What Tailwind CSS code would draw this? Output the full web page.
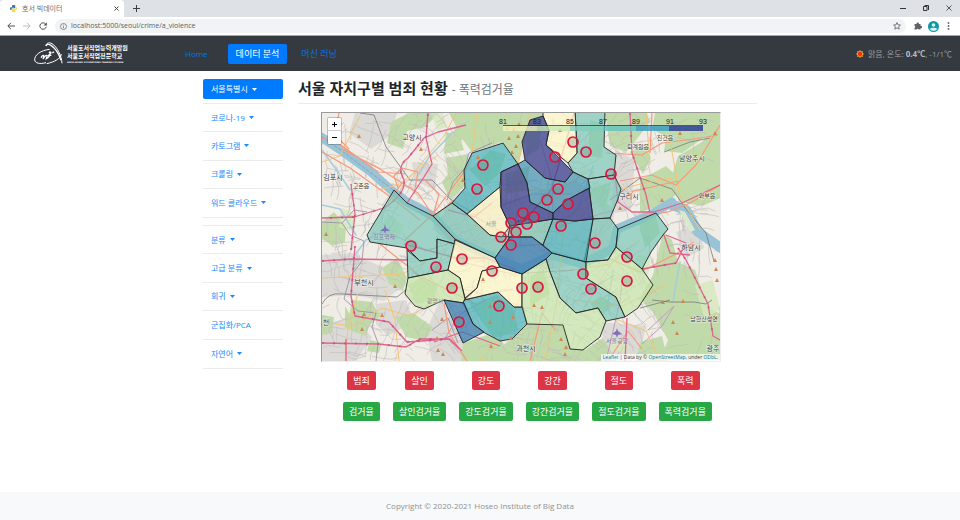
<!DOCTYPE html>
<html lang="ko">
<head>
<meta charset="utf-8">
<meta name="viewport" content="width=device-width, initial-scale=1">
<title>호서 빅데이터</title>
<script src="https://cdn.jsdelivr.net/npm/@tailwindcss/browser@4"></script>
</head>
<body class="flex min-h-screen flex-col bg-white font-['Open_Sans','Noto_Sans_CJK_KR',sans-serif] text-[8px] leading-3 text-[#212529]">

<!-- browser window -->
<div class="flex h-[17px] items-end justify-between bg-[#dee1e6]">
  <div class="flex items-center gap-3">
    <div class="flex h-[17px] w-[124px] items-center rounded-t bg-white pr-1 pl-[10px]">
      <svg class="size-[7px]" viewBox="0 0 14 14" aria-hidden="true"><path fill="#3776ab" d="M7 0C4 0 4 1.400 4 2v2h3.500v.7H2.300C.8 4.700 0 5.800 0 7.300S1 10 2 10h1V8.500C3 7 4 6.500 5 6.500h4c1 0 1.600-.7 1.600-1.600V2C10.600.7 9.500 0 7 0z"/><path fill="#ffd43b" d="M7 14c3 0 3.300-1.300 3.300-2v-2H7v-.7h5C13.400 9.300 14 8.200 14 7s-.8-3-2-3h-1v1.800C11 7 10 7.700 9 7.700H5.300c-1 0-1.600.7-1.600 1.600V12c0 1.300 1 2 3.300 2z"/></svg>
      <span class="ml-[5px] flex-1 text-[7px] text-[#6a6d71]">호서 빅데이터</span>
      <button type="button" aria-label="탭 닫기" class="grid size-2 place-items-center"><svg class="size-[5px]" viewBox="0 0 5 5" stroke="#45494d"><path d="M.5.5l4 4M4.500.5l-4 4"/></svg></button>
    </div>
    <button type="button" aria-label="새 탭" class="-ml-1 grid size-2 place-items-center"><svg class="size-[7px]" viewBox="0 0 7 7" stroke="#3c4043"><path d="M3.500 0v7M0 3.500h7"/></svg></button>
  </div>
  <div class="flex h-[15px] items-center gap-[17px] self-start pr-2">
    <button type="button" aria-label="최소화" class="flex"><svg class="size-[6px]" viewBox="0 0 6 6" stroke="#333"><path d="M0 3.500h6"/></svg></button>
    <button type="button" aria-label="창 크기" class="flex"><svg class="size-[6px]" viewBox="0 0 6 6" fill="none" stroke="#333"><path d="M.5 1.500h3.500v4H.5zM1.700.5h3.800V5"/></svg></button>
    <button type="button" aria-label="닫기" class="flex"><svg class="size-[6px]" viewBox="0 0 6 6" stroke="#333" stroke-width=".8"><path d="M.5.5l5 5M5.500.5l-5 5"/></svg></button>
  </div>
</div>
<div class="flex h-[19px] items-center gap-2 border-b border-[#a5a7aa] bg-white pr-2 pl-[7px]">
  <button type="button" aria-label="뒤로"><svg class="size-2" viewBox="0 0 8 8" fill="none" stroke="#4b4f54"><path d="M8 4H1M4 .8L.8 4 4 7.200"/></svg></button>
  <button type="button" aria-label="앞으로"><svg class="size-2" viewBox="0 0 8 8" fill="none" stroke="#babcbe"><path d="M0 4h7M4 .8L7.200 4 4 7.200"/></svg></button>
  <button type="button" aria-label="새로고침"><svg class="size-2" viewBox="0 0 8 8" fill="none" stroke="#4b4f54"><path d="M6.700 2.200A3.200 3.200 0 1 0 7.200 4.800"/><path fill="#4b4f54" stroke="none" d="M7.800.3v3.200H4.600z"/></svg></button>
  <div class="flex h-[14px] flex-1 items-center gap-1 rounded-full bg-[#f1f3f4] px-[5px]">
    <svg class="size-[7px]" viewBox="0 0 7 7" fill="none" stroke="#5f6368" stroke-width=".7"><circle cx="3.500" cy="3.500" r="3"/><path d="M3.500 3v2.200M3.500 1.600v.8"/></svg>
    <input type="text" aria-label="주소" value="localhost:5000/seoul/crime/a_violence" class="min-w-0 flex-1 bg-transparent text-[7px] text-[#5c5f63] outline-none">
    <button type="button" aria-label="북마크"><svg class="size-2" viewBox="0 0 14 14" fill="none" stroke="#5f6368" stroke-width="1.500"><path d="M7 1l1.800 4 4.200.4-3.200 2.800 1 4.300L7 10.200l-3.800 2.300 1-4.300L1 5.400 5.200 5z"/></svg></button>
  </div>
  <div class="flex items-center gap-[6px]">
    <button type="button" aria-label="확장 프로그램"><svg class="size-2" viewBox="0 0 16 16" fill="#5f6368"><path d="M1 4h4.200a2.300 2.300 0 1 1 4.400 0H13v4a2.300 2.300 0 1 1 0 4.300V15H9.500a2.200 2.200 0 0 0-4.300 0H1v-3.700a2.100 2.100 0 0 0 0-4z"/></svg></button>
    <button type="button" aria-label="프로필"><svg class="size-[11px]" viewBox="0 0 22 22"><circle cx="11" cy="11" r="11" fill="#0e98a6"/><circle cx="11" cy="8" r="3.600" fill="#d5f1f3"/><path fill="#d5f1f3" d="M3.500 16c2-3.200 13-3.200 15 0-3.500 5-11.500 5-15 0z"/></svg></button>
    <button type="button" aria-label="메뉴" class="px-[2px]"><svg class="h-2 w-[3px]" viewBox="0 0 3 8" fill="#5f6368"><circle cx="1.500" cy="1" r=".9"/><circle cx="1.500" cy="4" r=".9"/><circle cx="1.500" cy="7" r=".9"/></svg></button>
  </div>
</div>

<!-- site navigation -->
<nav class="flex h-[35px] items-center bg-[#343a40] pr-2 pl-[33px]">
  <a href="#" class="flex w-[144px] items-center gap-1 text-white">
    <svg class="h-6 w-[30px]" viewBox="0 0 90 72" fill="none" stroke="#fff" aria-hidden="true">
      <path stroke-width="3" d="M50 22C23 25 4 39 5 54c1 10 16 13 34 8M41 65C65 60 84 49 85 36"/>
      <path stroke-width="3" d="M39 12c0-9 9-12 18-7 15 9 29 36 30 59"/>
      <path stroke-width="4" d="M39 12c2-6 9-6 15-2 12 8 24 26 30 45"/>
      <path stroke-width="4" d="M24 47c5-8 9-9 8-2l-2 6c5-9 11-14 12-8l-2 7c6-3 9-7 12-12M48 33c3-5 7-3 5 1l-6 6h8M58 33l5-4"/>
    </svg>
    <span class="flex flex-col font-bold whitespace-nowrap">
      <span class="text-[6px] leading-2">서울호서직업능력개발원</span>
      <span class="text-[6px] leading-2">서울호서직업전문학교</span>
      <span class="font-['DejaVu_Sans',sans-serif] text-[2px] leading-1">SEOUL HOSEO OCCUPATIONAL TRAINING COLLEGE</span>
    </span>
  </a>
  <ul class="flex items-center gap-2 text-[#0874e6]">
    <li><a href="#" class="block px-2 py-1">Home</a></li>
    <li class="ml-1"><a href="#" class="block rounded-[2px] bg-[#007bff] px-2 py-1 text-[9px] text-white">데이터 분석</a></li>
    <li><a href="#" class="block px-[6px] py-1 text-[9px]">머신 러닝</a></li>
  </ul>
  <div class="ml-auto flex items-center gap-1 text-[#9a9da0]">
    <svg class="size-2" viewBox="0 0 16 16" aria-label="맑음"><path fill="#f5a52a" d="M8 0l2 3 3.700-1-.6 3.700L16 8l-2.900 2 .6 3.900-3.700-.8L8 16l-2-2.900-3.700.8.6-3.900L0 8l2.900-2.300L2.300 2 6 3z"/><circle cx="8" cy="8" r="4.300" fill="#f32d13"/></svg>
    <span>맑음, 온도: <b class="text-[#b8babc]">0.4℃</b>, -1/1℃</span>
  </div>
</nav>

<main class="mx-auto grid w-full max-w-[570px] flex-1 grid-cols-[80px_1fr] items-start gap-[15px] px-2 pt-2">
  <nav aria-label="메뉴" class="text-[#1a88ff]">
    <a href="#" class="flex h-5 items-center gap-1 rounded-[2px] bg-[#007bff] px-2 text-white">서울특별시<svg class="h-[3px] w-[5px]" viewBox="0 0 5 3" fill="currentColor"><path d="M0 0h5L2.500 3z"/></svg></a>
    <ul class="mt-1 grid min-h-[115px] auto-rows-fr divide-y divide-[#ebebeb] border-y border-[#ebebeb]">
      <li class="flex items-center px-2"><a href="#" class="flex items-center gap-1">코로나-19<svg class="h-[3px] w-[5px]" viewBox="0 0 5 3" fill="currentColor"><path d="M0 0h5L2.500 3z"/></svg></a></li>
      <li class="flex items-center px-2"><a href="#" class="flex items-center gap-1">카토그램<svg class="h-[3px] w-[5px]" viewBox="0 0 5 3" fill="currentColor"><path d="M0 0h5L2.500 3z"/></svg></a></li>
      <li class="flex items-center px-2"><a href="#" class="flex items-center gap-1">크롤링<svg class="h-[3px] w-[5px]" viewBox="0 0 5 3" fill="currentColor"><path d="M0 0h5L2.500 3z"/></svg></a></li>
      <li class="flex items-center px-2"><a href="#" class="flex items-center gap-1">워드 클라우드<svg class="h-[3px] w-[5px]" viewBox="0 0 5 3" fill="currentColor"><path d="M0 0h5L2.500 3z"/></svg></a></li>
    </ul>
    <ul class="mt-[7px] grid min-h-36 auto-rows-fr divide-y divide-[#ebebeb] border-y border-[#ebebeb]">
      <li class="flex items-center px-2"><a href="#" class="flex items-center gap-1">분류<svg class="h-[3px] w-[5px]" viewBox="0 0 5 3" fill="currentColor"><path d="M0 0h5L2.500 3z"/></svg></a></li>
      <li class="flex items-center px-2"><a href="#" class="flex items-center gap-1">고급 분류<svg class="h-[3px] w-[5px]" viewBox="0 0 5 3" fill="currentColor"><path d="M0 0h5L2.500 3z"/></svg></a></li>
      <li class="flex items-center px-2"><a href="#" class="flex items-center gap-1">회귀<svg class="h-[3px] w-[5px]" viewBox="0 0 5 3" fill="currentColor"><path d="M0 0h5L2.500 3z"/></svg></a></li>
      <li class="flex items-center px-2"><a href="#">군집화/PCA</a></li>
      <li class="flex items-center px-2"><a href="#" class="flex items-center gap-1">자연어<svg class="h-[3px] w-[5px]" viewBox="0 0 5 3" fill="currentColor"><path d="M0 0h5L2.500 3z"/></svg></a></li>
    </ul>
  </nav>

  <section>
    <h1 class="flex items-baseline gap-1 border-b border-[#ebebeb] pb-[6px] text-[15px] leading-[18px] font-bold">서울 자치구별 범죄 현황 <small class="text-[12px] leading-3 font-normal text-[#6c757d]">- 폭력검거율</small></h1>

    <div class="relative mt-2 mr-9 ml-[23px] border border-t-[#9a9a9a] border-r-[#eee] border-b-[#eee] border-l-[#9a9a9a]">
      <svg id="map" class="block w-full" viewBox="322 113 398 248" role="img" aria-label="서울 자치구별 폭력검거율 지도">
        <rect x="322" y="113" width="398" height="248" fill="#f0ede6"/>
        <!-- built-up areas -->
        <g fill="#dcdad7">
          <path d="M355 113h42l-6 22-20 14-22-16zM322 255l30-2 30 14 20 20-18 14-30-6-32 2zM376 304l30-4 8 22-26 14-12-12zM412 162l26 2-4 26-20-10zM440 300l24 40 4 21h-36l-6-30zM455 190l60 10 60-20 40 30-10 50-60 10-80-10-30-30zM602 322l44 4-6 28-36 6zM615 150l20 10-4 50-20 4zM676 232l22-8 6 24-18 10zM322 325l30-8 20 20-16 24h-34z"/>
        </g>
        <!-- forest and parks -->
        <g fill="#c0dba9">
          <path d="M449 113h96l-8 16-14 17-5 20-16-24-30 10-9-12-12-2 5-12zM446 158l22-4-3 32-15 14-8-18 6-8zM322 222l12-10 12 14-1 16-13 4-10-8zM391 122l18-9h30l-14 14-18 4-4 18-16-6zM446 132l14 6 4 12-20 4z"/>
          <path d="M605 113h42l3 9-14 18-10 12-16-6zM655 113h65v12l-18 14-20 14-18-2 2-14-14-8zM720 116v82l-18 8-22-4-10-20 8-26 24-14zM630 152l14-8 7 14-8 16zM640 180l26-14 19 18-18 20-27 8z"/>
          <path d="M663 232l9 8 6 22 17 8 12 36 13 8v46h-60l8-20-14-26-14-16 13-23zM527 324l36 2 8 22 14 2 18-12 14 23H480l26-18zM463 343l24-8 16 7-6 19h-36zM640 342l22-6 6 25h-32z"/>
          <path d="M382 268l15-10 10 20-4 12-14-6zM352 300l20 2 8 14-14 12-18-6zM345 306l8 14 16 6-4 10-20-8zM395 317l18-4 20 14-8 14-19-4zM322 315l12 2-2 16-10 2zM370 340l12 3-3 10-12-2zM408 285l14-8 16 9-4 14-18 4zM470 170l20-20 16 4-7 20-14 12zM505 174l24-8-2 24-20 4zM528 125l14-6-3 30-14 8zM590 120l14 4-2 34-14-2zM586 190l25-8-6 30zM470 305l26-10 18 14 4 22-24 7zM530 276l14-6 6 24-20 12zM590 304l10-8 14 8-12 12zM638 220l18-3 4 16-15 15z"/>
        </g>
        <g fill="#d6e8bd" opacity=".8"><path d="M388 214l16 12-9 16-18-8zM341 208l16 6-4 17-14-4zM431 113h12l4 14-10 3zM695 285l18-5 7 30-16 8zM637 255l14 2-3 19-16-5zM610 336l18 6-2 12-16-4z"/></g>
        <g id="streets" fill="none" stroke="#bfbcba" stroke-width=".6"></g>
        <!-- rivers -->
        <g fill="none" stroke-linejoin="round" stroke-linecap="round">
          <path stroke="#99c4d6" stroke-width="9" d="M318 135l24 16 28 20 20 18 17 13 26 14 22 24 40 18 27 11 30-14 30 9 30-15 5-20 33-14 22-13"/>
          <path stroke="#99c4d6" stroke-width="10" d="M672 205l14 5 12 22 26 18"/>
          <path stroke="#a7cddd" stroke-width="1.500" d="M322 150l16 22 12 18M350 262l16-22 24-12M419 174l10-17 24-25M561 228l18-22 14-40M474 280l-4 20 12 20M607 310l6-40M680 262l-4 22-3 18M322 205l18 4 16 26"/>
          <path stroke="#8193b8" stroke-width=".7" stroke-dasharray="3 2" d="M322 137l20 14 50 38 15 14"/>
        </g>
        <path fill="#dce8cb" d="M679 210l6 2 10 18-5 2z"/>
        <!-- administrative borders and railways -->
        <g fill="none" stroke-width="1">
          <path stroke="#9688ab" opacity=".8" d="M322 222l20 1 8 12 14 6-2 20-12 16-6 22 14 12 18 2-4 14 6 16-2 18M342 223l12-13 13 2M447 200l6-18 12-14 4-15 23-10M432 330l16-12 10 25"/>
          <path stroke="#77797d" stroke-width=".8" d="M360 113l14 2 12 32 24 33 22 0 18 19 20 12M322 304q6-12 20-10l55 3 10-8M610 200l30-22 32 11 14 20 20 24 8 28M664 152l26-10 20-4M652 300l18 2 24 0 12 2 6-4M640 308l30-8"/>
          <path stroke="#c09bbf" d="M606 361l14-60 2-20M444 340l16-26 26-14M648 330l26-24-12 20-20 18"/>
        </g>
        <!-- roads -->
        <g fill="none" stroke-linejoin="round">
          <g stroke="#f5c375" stroke-width="1"><path d="M400 190l24-30 20-24 12-23M322 322l30 4 30-18 28 8 24-14M385 290l10 30 4 41M322 278l80-4 24-12M345 361l3-32 10-36M455 190l16-30 6-47M480 361l30-34 16-50M530 113l-12 50-3 44M545 361l12-60 6-70M573 300l50 6 40-20M640 240l-30 24-50 8M620 190l20-6 32-6M650 165l-4-52M700 230l-20-34-9-50M470 225l60 10 60-30M500 190l60 0 30-20M378 190l20-5 40-30M360 116l-20 40-18 6M660 361l-14-30-30-12"/></g>
          <g stroke="#f7997c" stroke-width="1.200"><path d="M322 152l28 16 42 30 28 22M342 149l38 20 38 24 16 24M322 138l16 5 40 29 28 2M388 203l14-20M398 188l-4-12 8-8 16 4-4 22M433 216l6-22-14-14M339 113l-4 22 14 14M620 181l32-6 24 10 20-20 18-30 6-10M606 153l36 2 20-12 32-4 24-4M652 113l-2 40M530 361l12-48 14 18M608 361l20-30 14 18M624 198l10-7 44-10M454 200l-20 17 32 37M720 185l-30 18-22 9-26 4M608 258l32 14 36-18 18-12M405 240l28-26 34-46M467 361l-18-28-5-30M380 244l40 32 56 28"/></g>
          <g stroke="#e0648f" stroke-width="1.300"><path d="M351 250l4-36-4-30M322 218l32-1 30-9q22-14 20-28q-8-14 4-22l16-20 14-6 28-7M355 246l-4 50 4 20 34 6 18 20 42-3 10 10M322 261l30-2 56 1M322 343l56 1 28 3 14-8 30 0 12 12M346 361l0-22M407 203l17-26 8-13-6-26 2-25M448 210l26 7 18-14M404 244l52 14 30 0 30 12M525 220l26-30 16-52 7-25M630 113l2 40 14 42 4 18M615 174l3 28 14 10 22 0 28-9 38-18M642 269l34-6 10-20-20-8M678 248l8 12 22 44 5 32 9 5M627 318l-2 43M664 235l6 18 20 2M434 342l28-10 38 14"/></g>
          <g stroke="#b84a7c" stroke-width="2" stroke-dasharray="2 9" opacity=".6"><path d="M351 250l4-36-4-30M330 218l24-1 30-9q22-14 20-28q-8-14 4-22l16-20M355 246l-4 50 4 20 34 6 18 20 42-3M322 261l30-2M322 343l56 1 28 3 14-8 30 0M426 138l2-25M630 113l2 40 14 42M642 269l34-6M678 248l8 12 22 44 5 32"/></g>
          <g stroke="#b7558b" stroke-width="1"><path opacity=".5" d="M372 233l26 4 28 14 24-8M457 208l36 18 22 20 34-2M540 140l12 40 1 40M500 206l32-12 40 0M560 226l54-16M462 262l50 12 62-4M580 295l35-20M450 285l35 10 28-6"/></g>
        </g>
        <!-- districts -->
        <g stroke="#242424" stroke-width=".9" stroke-linejoin="round">
          <g fill="#76c6b6" fill-opacity=".66">
            <path d="M394 190l13 13 26 13 22 23v5l-18-5v19l-17 3-13-13-37-6-3-7z"/>
            <path d="M407 250l13 11 17-3v-19l18 5-7 26-40 8z"/>
            <path d="M433 216l19-13 15 11 23 21 20 2-15 21-40-19z"/>
            <path d="M575 110h30l-1 37 12 8-2 20-26 4-15-7-5-9 9-10-1-23z"/>
            <path d="M588 179l26-4 7 14-3 10-8 19-17 1z"/>
            <path d="M593 219l17-1 8 11-2 18-8 13-24 2z"/>
            <path d="M618 229l38-16 12 16-5 6-12 17-9 17-26-22z"/>
            <path d="M546 259l6-6 34 9v16l30 19 9 20-19 4-8-13-22 5-16-15-10-26z"/>
            <path d="M510 226l43-7-10 26-11-8h-24z"/>
          </g>
          <g fill="#42afba" fill-opacity=".68">
            <path d="M472 153l31-10 15 21-17 8-1 15-33 27-15-11 13-15-1-18z"/>
            <path d="M464 300l34-8 16 15h9l4 17-15 15-12 2-17-9-10-8-10-21z"/>
            <path d="M553 219l22 2 18-2-7 43-34-9-9-8z"/>
          </g>
          <g fill="#fff7c8" fill-opacity=".74">
            <path d="M543 110h32l1 20 1 23-9 10-22-18 3-15-6-14z"/>
            <path d="M467 214l33-27 1 20 9 19-8 11-12-2z"/>
            <path d="M455 240l40 18 5 9-18 4-5 17-12 10-5-20-12-8z"/>
            <path d="M482 271l18-4 22 7v33h-8l-16-15-34 8 13-12z"/>
          </g>
          <g fill="#c6e5a9" fill-opacity=".7">
            <path d="M408 278l40-8 12 8 5 21-2 4-19-3-20 9-9-3-10-12z"/>
            <path d="M546 259l4 13 10 26 16 15 22-5 8 13-6 16-17 13-13-1-7-24-36-1-5-17v-33z"/>
            <path d="M586 262l22-2 8-13 26 22 11 16-15 23-13 9-9-20-30-19z"/>
          </g>
          <g fill="#3478ae" fill-opacity=".74">
            <path d="M510 237h22l20 16-6 6-24 15-22-7-5-9z"/>
            <path d="M444 300l20 3 9 21 11 8-21 11z"/>
          </g>
          <path fill="#3f91b1" fill-opacity=".7" d="M518 164l7-4 20 18 20 4 8-10 15 7 2 9-23 12-14 13-23-11-3-19z"/>
          <g fill="#3e4290" fill-opacity=".78">
            <path d="M530 120l13-4 6 14-3 15 27 27-8 10-20-4-20-18-3-18z"/>
            <path d="M501 172l17-8 9 19 3 19 23 11v6l-43 7-9-19z"/>
            <path d="M589 188l-22 12-14 13v6l22 2 18-2z"/>
          </g>
        </g>
        <!-- peaks -->
        <g id="peaks" fill="#cf8650"></g>
        <path fill="#8171bd" d="M617 328l1 3 4 3-4 1-1 3-1-3-4-1 4-3zM385 224l1 4 4 3-4 0-1 3-1-3-4 0 4-3z"/>
        <!-- place names -->
        <g fill="#3a3a3a" stroke="#fff" stroke-opacity=".65" stroke-width="1.200" paint-order="stroke" text-anchor="middle" font-family="'Noto Sans CJK KR', sans-serif" font-size="7">
          <text x="412" y="140">고양시</text><text x="333" y="180">김포시</text><text x="364" y="285">부천시</text><text x="692" y="161">남양주시</text><text x="629" y="199">구리시</text><text x="691" y="250">하남시</text><text x="526" y="351">과천시</text><text x="713" y="351">광주</text><text x="326" y="325">천</text>
          <g font-size="6"><text x="361" y="188">고촌읍</text><text x="665" y="140">진건읍</text><text x="638" y="149">퇴계원읍</text><text x="707" y="198">와부읍</text><text x="704" y="321">남한산성면</text></g>
          <g fill="#8a78a8" font-size="6" stroke-opacity=".2"><text x="384" y="239">김포국제</text><text x="617" y="343">서울공항</text><text x="435" y="303" fill="#8b8b7b">광명시</text><text x="491" y="226" fill="#9a9a86">서울</text><text x="522" y="223" fill="#202068">서울</text></g>
        </g>
        <!-- stations -->
        <g fill="#888" fill-opacity=".35" stroke="#dc143c" stroke-width="1.700">
          <circle cx="483" cy="165" r="5"/><circle cx="477" cy="189" r="5"/><circle cx="555" cy="157" r="5"/><circle cx="573" cy="142" r="5"/><circle cx="586" cy="152" r="5"/><circle cx="558" cy="189" r="5"/><circle cx="547" cy="200" r="5"/><circle cx="568" cy="204" r="5"/><circle cx="523" cy="213" r="5"/><circle cx="534" cy="217" r="5"/><circle cx="511" cy="223" r="5"/><circle cx="527" cy="224" r="5"/><circle cx="516" cy="232" r="5"/><circle cx="501" cy="237" r="5"/><circle cx="561" cy="226" r="5"/><circle cx="611" cy="174" r="5"/><circle cx="411" cy="246" r="5"/><circle cx="436" cy="267" r="5"/><circle cx="452" cy="288" r="5"/><circle cx="462" cy="259" r="5"/><circle cx="492" cy="271" r="5"/><circle cx="511" cy="245" r="5"/><circle cx="522" cy="288" r="5"/><circle cx="538" cy="287" r="5"/><circle cx="583" cy="274" r="5"/><circle cx="499" cy="306" r="5"/><circle cx="459" cy="322" r="5"/><circle cx="595" cy="243" r="5"/><circle cx="627" cy="257" r="5"/><circle cx="591" cy="289" r="5"/><circle cx="627" cy="281" r="5"/>
        </g>
        <!-- legend -->
        <g fill-opacity=".8"><path fill="#f0f2bd" d="M503 126h34v5h-34z"/><path fill="#c7e9b4" d="M537 126h33v5h-33z"/><path fill="#7fcdbb" d="M570 126h33v5h-33z"/><path fill="#62c0bf" d="M603 126h33v5h-33z"/><path fill="#3498c1" d="M636 126h33v5h-33z"/><path fill="#253494" d="M669 126h34v5h-34z"/></g>
        <path stroke="#222" stroke-width=".7" d="M503 125.500h200"/>
        <g fill="#222" text-anchor="middle" font-family="'Liberation Sans', sans-serif" font-size="7"><text x="503" y="124">81</text><text x="537" y="124">83</text><text x="570" y="124">85</text><text x="603" y="124">87</text><text x="636" y="124">89</text><text x="670" y="124">91</text><text x="703" y="124">93</text></g>
      </svg>
      <div class="absolute top-1 left-[5px] flex w-[15px] flex-col divide-y divide-[#ccc] overflow-hidden rounded-[2px] border border-black/20 bg-white bg-clip-padding">
        <button type="button" aria-label="확대" class="grid h-[13px] place-items-center"><svg class="size-[5px]" viewBox="0 0 5 5" stroke="#000"><path d="M2.500 0v5M0 2.500h5"/></svg></button>
        <button type="button" aria-label="축소" class="grid h-[13px] place-items-center"><svg class="size-[5px]" viewBox="0 0 5 5" stroke="#000"><path d="M0 2.500h5"/></svg></button>
      </div>
      <p class="absolute right-0 bottom-0 bg-white/70 px-[2px] text-[5px] leading-[7px] text-[#333]"><a href="#" class="text-[#0078a8]">Leaflet</a> | Data by © <a href="#" class="text-[#0078a8]">OpenStreetMap</a>, under <a href="#" class="text-[#0078a8]">ODbL</a>.</p>
    </div>

    <div class="mx-auto mt-[9px] grid w-fit grid-cols-[repeat(6,auto)] justify-items-center gap-x-[13px] gap-y-3 text-[9px] text-white">
      <button type="button" class="h-[19px] rounded-[2px] bg-[#dc3545] px-[6px]">범죄</button>
      <button type="button" class="h-[19px] rounded-[2px] bg-[#dc3545] px-[6px]">살인</button>
      <button type="button" class="h-[19px] rounded-[2px] bg-[#dc3545] px-[6px]">강도</button>
      <button type="button" class="h-[19px] rounded-[2px] bg-[#dc3545] px-[6px]">강간</button>
      <button type="button" class="h-[19px] rounded-[2px] bg-[#dc3545] px-[6px]">절도</button>
      <button type="button" class="h-[19px] rounded-[2px] bg-[#dc3545] px-[6px]">폭력</button>
      <button type="button" class="h-[19px] rounded-[2px] bg-[#28a745] px-[6px]">검거율</button>
      <button type="button" class="h-[19px] rounded-[2px] bg-[#28a745] px-[6px]">살인검거율</button>
      <button type="button" class="h-[19px] rounded-[2px] bg-[#28a745] px-[6px]">강도검거율</button>
      <button type="button" class="h-[19px] rounded-[2px] bg-[#28a745] px-[6px]">강간검거율</button>
      <button type="button" class="h-[19px] rounded-[2px] bg-[#28a745] px-[6px]">절도검거율</button>
      <button type="button" class="h-[19px] rounded-[2px] bg-[#28a745] px-[6px]">폭력검거율</button>
    </div>
  </section>
</main>

<footer class="bg-[#f8f9fa] py-2 text-center text-[#8e9194]">Copyright © 2020-2021 Hoseo Institute of Big Data</footer>

<script>
  // Minor streets follow a seeded walk so the map looks the same on every load.
  let seed = 11;
  const rnd = () => (seed = (seed * 16807) % 2147483647) / 2147483647;
  let d = "";
  for (let i = 0; i < 900; i++) {
    let x = 322 + rnd() * 398, y = 113 + rnd() * 248;
    if (x > 655 && (y > 255 || y < 200) && rnd() < 0.85) continue;
    if (x > 455 && x < 545 && y < 165 && rnd() < 0.85) continue;
    const a = Math.round(rnd() * 3) * 1.57 + x / 110;
    d += `M${x.toFixed(1)} ${y.toFixed(1)}`;
    for (let k = 0; k < 3; k++) {
      const t = a + (rnd() - 0.5) * 0.9, l = 3 + rnd() * 8;
      d += `l${(Math.cos(t) * l).toFixed(1)} ${(Math.sin(t) * l).toFixed(1)}`;
    }
  }
  document.getElementById("streets").innerHTML = `<path d="${d}"/>`;
  const peaks = [[359,136],[421,149],[326,234],[509,138],[514,129],[518,136],[516,146],[507,128],[519,124],[512,152],[463,180],[395,286],[364,314],[362,329],[382,315],[437,338],[438,350],[443,354],[442,319],[491,346],[511,338],[561,339],[565,354],[566,347],[663,302],[683,301],[673,322],[677,333],[715,260],[716,269],[717,280],[680,133],[715,133],[662,200],[620,208],[490,306],[513,317],[490,322],[483,279],[534,305],[542,307],[478,157],[560,130]];
  document.getElementById("peaks").innerHTML = peaks.map(([x, y]) => `<path d="M${x} ${y - 2}l2 4h-4z"/>`).join("");
</script>
</body>
</html>
